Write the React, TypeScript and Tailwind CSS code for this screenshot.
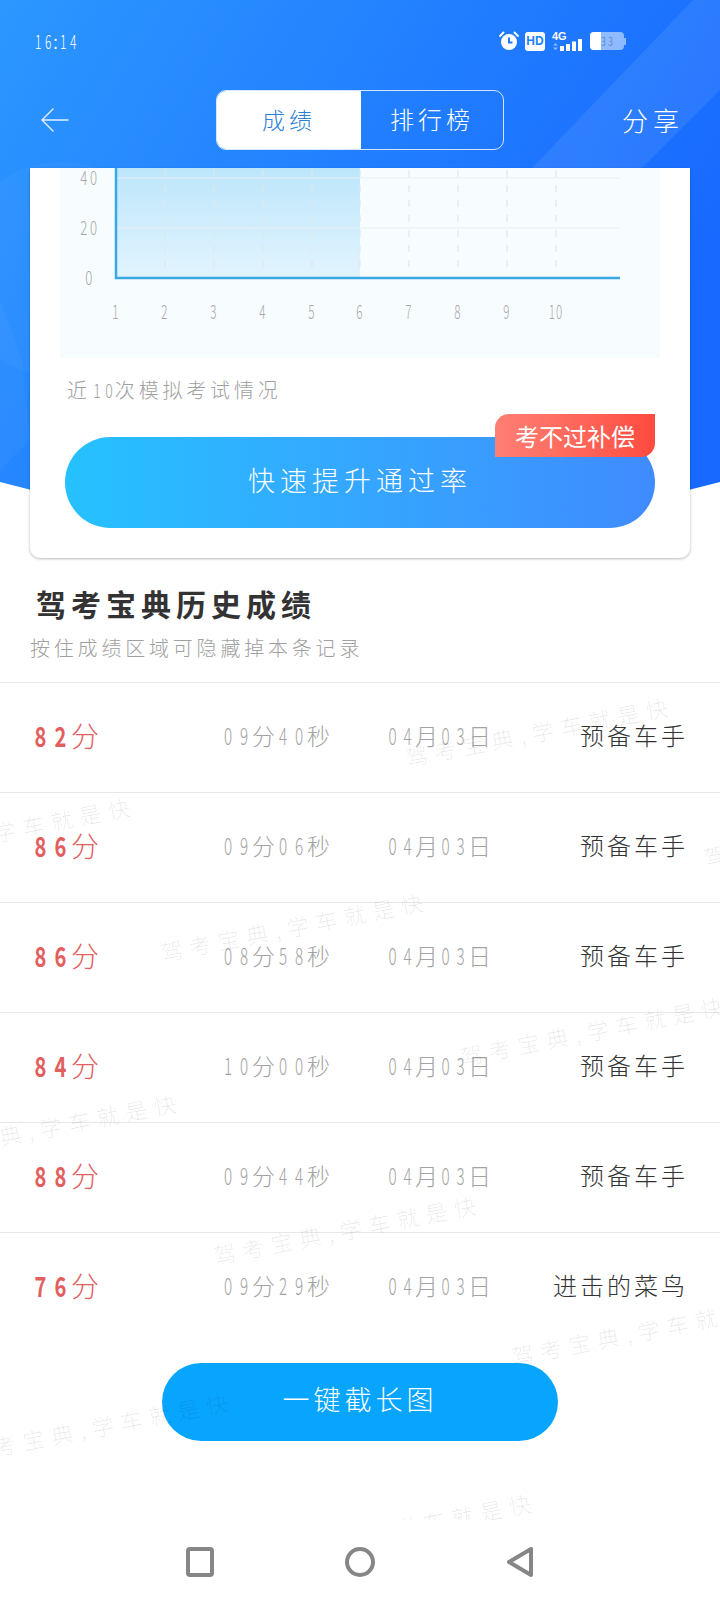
const WATERMARKS = [
	"left-[540px] top-[731px]",
	"left-[2px] top-[831px]",
	"left-[838px] top-[831px]",
	"left-[295px] top-[926px]",
	"left-[595px] top-[1030px]",
	"left-[48px] top-[1127px]",
	"left-[348px] top-[1229px]",
	"left-[646px] top-[1330px]",
	"left-[100px] top-[1426px]",
	"left-[403px] top-[1527px]",
];

const ROWS = [
	{ score: "82分", time: "09分40秒", title: "预备车手" },
	{ score: "86分", time: "09分06秒", title: "预备车手" },
	{ score: "86分", time: "08分58秒", title: "预备车手" },
	{ score: "84分", time: "10分00秒", title: "预备车手" },
	{ score: "88分", time: "09分44秒", title: "预备车手" },
	{ score: "76分", time: "09分29秒", title: "进击的菜鸟" },
];

const TICKS = [116, 165, 214, 263, 312, 360, 409, 458, 507, 556];

// digits in the shot are a tall narrow hand font, so squeeze them
function Mixed({ text, digit }: { text: string; digit: string }) {
	return (
		<>
			{text.split("").map((c, i) =>
				/[0-9]/.test(c) ? (
					<span key={i} className={digit}>
						{c}
					</span>
				) : (
					<span key={i}>{c}</span>
				),
			)}
		</>
	);
}

function HeaderBackground() {
	return (
		<svg className="absolute left-0 top-0" width="720" height="560" viewBox="0 0 720 560">
			<defs>
				<linearGradient id="headerBlue" x1="0" y1="0" x2="1" y2="0.45">
					<stop offset="0" stopColor="#2c97ff" />
					<stop offset="1" stopColor="#1869ff" />
				</linearGradient>
			</defs>
			<path d="M0 0H720V482Q360 578 0 482Z" fill="url(#headerBlue)" />
			<path d="M693 0L532 168L500 210H600L720 90V0Z" fill="#ffffff" fillOpacity="0.08" />
			<circle cx="62" cy="270" r="108" fill="#ffffff" fillOpacity="0.03" />
			<path d="M0 300L22 360L30 440L0 470Z" fill="#ffffff" fillOpacity="0.03" />
		</svg>
	);
}

function StatusBar() {
	return (
		<div className="relative h-[82px] mb-[8px] pl-[33px] pr-[94px] flex items-center justify-between text-white">
			<div className="text-[20px] font-light leading-none">
				<Mixed text="16:14" digit="inline-block w-[10px] text-center scale-x-[.6]" />
			</div>
			<div className="flex items-center">
				<svg width="20" height="20" viewBox="0 0 20 20" className="mr-[6px]">
					<circle cx="10" cy="11" r="8" fill="#fff" />
					<path d="M1 5L4.5 1.5M19 5L15.5 1.5" stroke="#fff" strokeWidth="1.8" strokeLinecap="round" />
					<path d="M10 6.5V11.5H13.5" stroke="#1f7fff" strokeWidth="2" fill="none" />
				</svg>
				<div className="w-[20px] h-[19px] bg-white rounded-[3px] mr-[7px] flex items-center justify-center text-[#1f7fff] text-[12px] font-bold leading-none font-['Liberation_Sans',sans-serif]">
					HD
				</div>
				<div className="relative w-[33px] h-[20px] mr-[5px]">
					<div className="absolute left-0 top-0 text-[11px] font-bold leading-none font-['Liberation_Sans',sans-serif]">4G</div>
					<svg className="absolute left-0 top-0" width="33" height="20" viewBox="0 0 33 20">
						<path d="M1 14.5L3.5 12L6 14.5ZM1 16.5L3.5 19L6 16.5Z" fill="#ffffff" fillOpacity="0.5" />
						<rect x="8" y="15" width="4" height="5" fill="#fff" />
						<rect x="14" y="13" width="4" height="7" fill="#fff" />
						<rect x="20" y="10.5" width="4" height="9.5" fill="#fff" />
						<rect x="26" y="8" width="4" height="12" fill="#fff" />
					</svg>
				</div>
				<div className="flex items-center">
					<div className="relative w-[34px] h-[18px] rounded-[4px] bg-white/50 overflow-hidden">
						<div className="w-[11px] h-full bg-white" />
						<div className="absolute left-[10px] top-[2px] text-[#4a6fae] text-[12px] font-light leading-[14px]">
							<Mixed text="33" digit="inline-block w-[7px] text-center scale-x-[.7]" />
						</div>
					</div>
					<div className="w-[2px] h-[7px] bg-white/50" />
				</div>
			</div>
		</div>
	);
}

function TopBar() {
	return (
		<div className="relative h-[60px] grid grid-cols-[1fr_288px_1fr] items-center text-white">
			<div className="pl-[41px]">
				<svg width="28" height="24" viewBox="0 0 28 24" fill="none" stroke="#e4f0ff" strokeWidth="1.4" strokeLinecap="round" strokeLinejoin="round">
					<path d="M27 12H1M12 1L1 12L12 23" />
				</svg>
			</div>
			<div className="h-[60px] flex rounded-[10px] overflow-hidden border border-white/80">
				<div className="w-[144px] bg-white flex items-center justify-center text-[#2f7fd6] text-[23px] tracking-[4px] font-light pb-[2px]">成绩</div>
				<div className="flex-1 flex items-center justify-center text-[24px] tracking-[4px] font-light pb-[2px]">排行榜</div>
			</div>
			<div className="pr-[36px] text-right text-[26px] tracking-[5px] font-light pb-[2px]">分享</div>
		</div>
	);
}

function Chart() {
	return (
		<div className="h-[190px] mx-[30px] bg-[#f7fcff]">
			<svg width="600" height="190" viewBox="60 168 600 190">
				<defs>
					<linearGradient id="chartFill" x1="0" y1="0" x2="0" y2="1">
						<stop offset="0" stopColor="#bde6fb" />
						<stop offset="1" stopColor="#e2f4fe" />
					</linearGradient>
				</defs>
				<rect x="116" y="168" width="244" height="110" fill="url(#chartFill)" />
				<path d="M116 178H620M116 228H620" stroke="#e9eff3" strokeWidth="1" />
				{TICKS.slice(1).map((x) => (
					<line key={x} x1={x} y1="170" x2={x} y2="272" stroke="#dfe6ea" strokeWidth="1.2" strokeDasharray="7 8" />
				))}
				<path d="M116 168V278H620" fill="none" stroke="#38a9e2" strokeWidth="2.5" />
				{[
					["40", 178],
					["20", 228],
					["0", 278],
				].map(([label, y]) => (
					<text key={label} transform={`translate(90 ${Number(y) + 7}) scale(.66 1)`} textAnchor="middle" fontSize="20" letterSpacing="4" fill="#a8a8a8" fontWeight="300" fontFamily="Noto Sans CJK SC, sans-serif">
						{label}
					</text>
				))}
				{TICKS.map((x, i) => (
					<text key={x} transform={`translate(${x} 319) scale(.58 1)`} textAnchor="middle" fontSize="20" letterSpacing="2" fill="#a8a8a8" fontWeight="300" fontFamily="Noto Sans CJK SC, sans-serif">
						{i + 1}
					</text>
				))}
			</svg>
		</div>
	);
}

function ScoreCard() {
	return (
		<div className="relative mx-[30px] bg-white rounded-b-[10px] shadow-[0_1px_3px_rgba(0,0,0,0.28)] pb-[30px]">
			<Chart />
			<div className="mt-[18px] pl-[37px] h-[28px] leading-[28px] text-[20px] tracking-[3.8px] font-light text-[#a0a0a0]">
				<Mixed text="近10次模拟考试情况" digit="inline-block w-[12px] tracking-normal text-center scale-x-[.7]" />
			</div>
			<div className="relative mt-[33px] mx-[35px] h-[91px] rounded-full bg-gradient-to-r from-[#25c1ff] to-[#3f8bff] flex items-center justify-center text-white text-[27px] tracking-[5px] font-light pb-[5px]">
				快速提升通过率
				<div className="absolute right-0 -top-[23px] w-[160px] h-[43px] rounded-tl-[14px] rounded-br-[14px] bg-gradient-to-r from-[#ff7f74] to-[#ff4a3f] flex items-center justify-center text-white text-[24px] tracking-normal font-normal leading-none">
					考不过补偿
				</div>
			</div>
		</div>
	);
}

function HistoryRow({ score, time, title }: { score: string; time: string; title: string }) {
	return (
		<div className="h-[110px] border-t border-[#e8e8e8] pl-[31px] pr-[35px] pb-[5px] grid grid-cols-[189px_165px_1fr_auto] items-center">
			<div className="text-[#e25f5f] text-[28px] font-light leading-none">
				<Mixed text={score} digit="inline-block w-[19px] mr-[1px] font-bold text-center scale-x-[.72]" />
			</div>
			<div className="text-[#a3a3a3] text-[23px] font-light leading-none">
				<Mixed text={time} digit="inline-block w-[16px] text-center scale-x-[.66]" />
			</div>
			<div className="text-[#a3a3a3] text-[23px] font-light leading-none">
				<Mixed text="04月03日" digit="inline-block w-[15px] text-center scale-x-[.66]" />
			</div>
			<div className="text-[#333333] text-[24px] tracking-[3px] font-light leading-none -mr-[3px]">{title}</div>
		</div>
	);
}

export default function App() {
	return (
		<div className="relative w-[720px] h-[1605px] overflow-hidden bg-white font-['Noto_Sans_CJK_SC','Noto_Sans',sans-serif]">
			<HeaderBackground />
			<StatusBar />
			<TopBar />
			<div className="h-[18px]" />
			<ScoreCard />

			<div className="relative mt-[25px] pl-[36px] h-[40px] leading-[40px] text-[30px] tracking-[5px] font-bold text-[#333333]">驾考宝典历史成绩</div>
			<div className="relative mt-[10px] pl-[30px] h-[30px] leading-[30px] text-[20px] tracking-[3.8px] font-light text-[#a0a0a0]">按住成绩区域可隐藏掉本条记录</div>

			<div className="relative mt-[19px]">
				{ROWS.map((r, i) => (
					<HistoryRow key={i} {...r} />
				))}
			</div>

			<div className="relative mt-[21px] mx-auto w-[396px] h-[78px] rounded-full bg-[#08a5ff] flex items-center justify-center text-white text-[27px] tracking-[4px] font-light pb-[5px]">
				一键截长图
			</div>

			{/* watermark, printed over the list */}
			<div className="absolute left-0 top-0 w-[720px] h-[1520px] overflow-hidden pointer-events-none">
				{WATERMARKS.map((pos) => (
					<div key={pos} className={`absolute ${pos} -translate-x-1/2 -translate-y-1/2 -rotate-[11deg] whitespace-nowrap text-[22px] tracking-[7px] font-light text-black/[.09]`}>
						驾考宝典,学车就是快
					</div>
				))}
			</div>

			<div className="relative mt-[79px] h-[85px] bg-white flex items-start justify-center pt-[27px]">
				<div className="w-[160px] flex justify-center">
					<svg width="30" height="30" viewBox="0 0 30 30" fill="none" stroke="#868686" strokeWidth="4" strokeLinejoin="round">
						<rect x="3" y="2" width="24" height="26" rx="2" />
					</svg>
				</div>
				<div className="w-[160px] flex justify-center">
					<svg width="30" height="30" viewBox="0 0 30 30" fill="none" stroke="#868686" strokeWidth="4">
						<circle cx="15" cy="15" r="13" />
					</svg>
				</div>
				<div className="w-[160px] flex justify-center">
					<svg width="30" height="30" viewBox="0 0 30 30" fill="none" stroke="#868686" strokeWidth="4" strokeLinejoin="round">
						<path d="M26 2V28L4 15Z" />
					</svg>
				</div>
			</div>
		</div>
	);
}
